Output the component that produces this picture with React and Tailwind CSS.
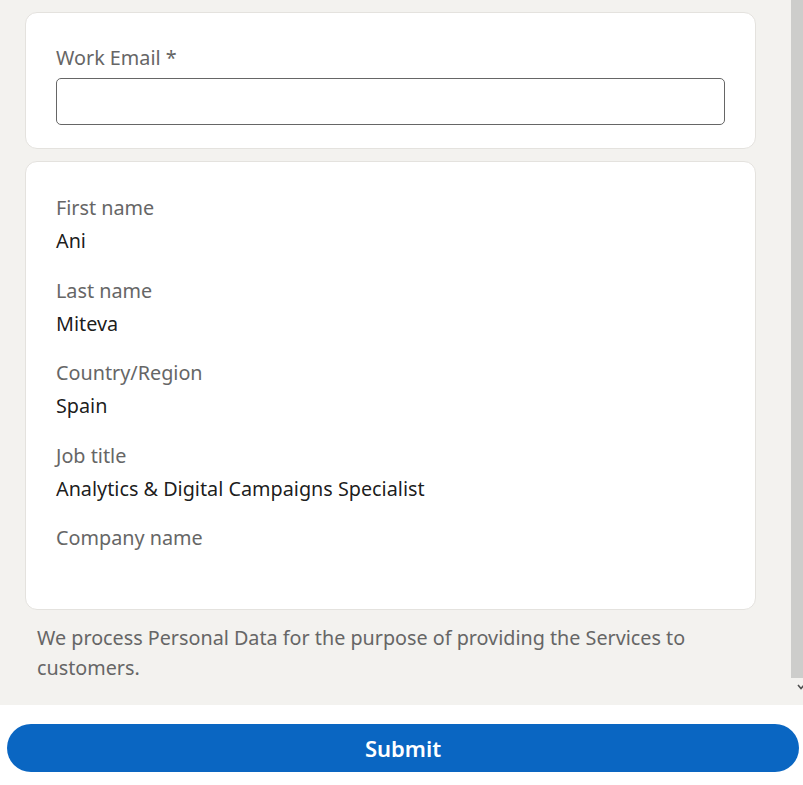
import React from 'react';

const fields = [
  { label: 'First name', value: 'Ani' },
  { label: 'Last name', value: 'Miteva' },
  { label: 'Country/Region', value: 'Spain' },
  { label: 'Job title', value: 'Analytics & Digital Campaigns Specialist' },
  { label: 'Company name', value: '' },
];

const App = () => {
  return (
    <div className="flex h-[785px] w-[803px] flex-col overflow-hidden bg-white font-['Noto_Sans',sans-serif]">
      <div className="flex h-[705px] bg-[#f3f2ef]">
        <div className="flex-1 pl-[25px] pr-[35px] pt-[12px]">
          <div className="rounded-[12px] border border-[#e4e2de] bg-white px-[30px] pb-[23px] pt-[30px]">
            <label className="block text-[19.8px] leading-[30px] text-[#666666]">Work Email *</label>
            <input
              type="email"
              className="mt-[5px] block h-[47px] w-full rounded-[5px] border-[1.5px] border-[#666666] bg-white px-3 text-[20px] outline-none"
            />
          </div>

          <div className="mt-[12px] rounded-[12px] border border-[#e4e2de] bg-white px-[30px] pb-[23px] pt-[31px]">
            {fields.map((f, i) => (
              <div key={f.label} className={i > 0 ? 'mt-[19.5px]' : ''}>
                <div className="text-[19.8px] leading-[30px] text-[#666666]">{f.label}</div>
                <div className="mt-[3px] h-[30px] text-[19.8px] leading-[30px] text-[#000000e6]">{f.value}</div>
              </div>
            ))}
          </div>

          <p className="mt-[13px] px-[12px] text-[19.75px] leading-[30px] text-[#666666]">
            We process Personal Data for the purpose of providing the Services to customers.
          </p>
        </div>

        <div className="flex w-[12px] flex-col">
          <div className="h-[678px] bg-[#cdcdcb]" />
          <div className="flex flex-1 items-start justify-end pt-[6px]">
            <svg width="8" height="6" viewBox="0 0 8 6" className="mr-[-2px]">
              <path d="M1 1 L4 4.5 L7 1" fill="none" stroke="#505050" strokeWidth="1.6" />
            </svg>
          </div>
        </div>
      </div>

      <div className="pl-[7px] pr-[4px] pt-[19px]">
        <button className="h-[48px] w-full rounded-full bg-[#0a66c2] text-[22px] font-semibold text-white">
          Submit
        </button>
      </div>
    </div>
  );
};

export default App;
